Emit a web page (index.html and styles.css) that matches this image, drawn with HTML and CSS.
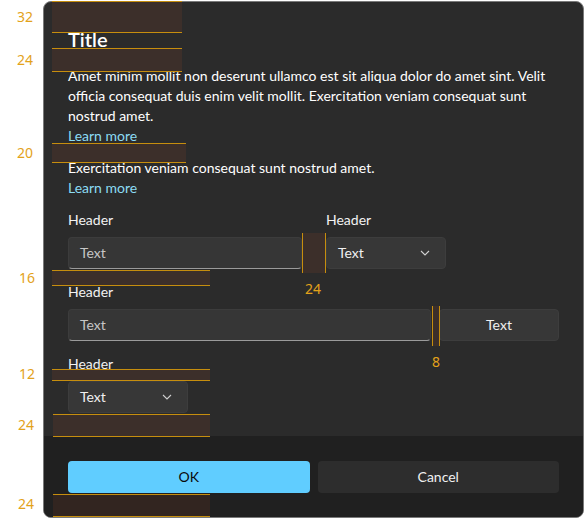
FILE: index.html
```html
<!DOCTYPE html>
<html>
<head>
<meta charset="utf-8">
<link rel="stylesheet" href="styles.css">
</head>
<body>
<div class="page">
  <div class="dialog">
    <div class="content">
      <div class="title">Title</div>
      <p class="body">Amet minim mollit non deserunt ullamco est sit aliqua dolor do amet sint. Velit<br>officia consequat duis enim velit mollit. Exercitation veniam consequat sunt<br>nostrud amet.<br><span class="link">Learn more</span></p>
      <p class="body p2">Exercitation veniam consequat sunt nostrud amet.<br><span class="link">Learn more</span></p>
      <div class="row row-wide">
        <div class="field f-text">
          <div class="label">Header</div>
          <div class="textbox">Text</div>
        </div>
        <div class="field f-combo">
          <div class="label">Header</div>
          <div class="combo"><span>Text</span><svg class="chev" width="10" height="6" viewBox="0 0 10 6"><path d="M1 1 L5 5 L9 1" fill="none" stroke="#cfcfcf" stroke-width="1.1"/></svg></div>
        </div>
      </div>
      <div class="field spaced">
        <div class="label">Header</div>
        <div class="row row-tight">
          <div class="textbox grow">Text</div>
          <div class="btn">Text</div>
        </div>
      </div>
      <div class="field spaced">
        <div class="label">Header</div>
        <div class="combo small"><span>Text</span><svg class="chev" width="10" height="6" viewBox="0 0 10 6"><path d="M1 1 L5 5 L9 1" fill="none" stroke="#cfcfcf" stroke-width="1.1"/></svg></div>
      </div>
    </div>
    <div class="footer">
      <div class="fbtn ok">OK</div>
      <div class="fbtn cancel">Cancel</div>
    </div>
  </div>

  <div class="ov h o32"></div><div class="num n32">32</div>
  <div class="ov h o24a"></div><div class="num n24a">24</div>
  <div class="ov h o20"></div><div class="num n20">20</div>
  <div class="ov h o16"></div><div class="num n16">16</div>
  <div class="ov v g24"></div><div class="num ng24">24</div>
  <div class="ov v g8"></div><div class="num ng8">8</div>
  <div class="ov h o12"></div><div class="num n12">12</div>
  <div class="ov h o24b"></div><div class="num n24b">24</div>
  <div class="ov h o24c"></div><div class="num n24c">24</div>
</div>
</body>
</html>
```
FILE: styles.css
```css
html, body {
  margin: 0;
  padding: 0;
  background: #ffffff;
}
.page {
  position: relative;
  width: 586px;
  height: 523px;
  overflow: hidden;
  font-family: "Lato", "Noto Sans", sans-serif;
}
.dialog {
  box-sizing: border-box;
  margin: 1px 0 0 43px;
  width: 541px;
  height: 517px;
  border: 1px solid #7a7a7a;
  border-radius: 8px;
  overflow: hidden;
  display: flex;
  flex-direction: column;
  background: #2b2b2b;
}
.content {
  flex: 1;
  padding: 23px 24px 0 24px;
  color: #ffffff;
}
.title {
  font-size: 20px;
  line-height: 28px;
  font-weight: 600;
  margin: 0;
}
.body {
  font-size: 14px;
  line-height: 20px;
  margin: 13px 0 0 0;
  white-space: nowrap;
}
.body.p2 {
  margin-top: 12px;
}
.link {
  color: #8cdcf4;
}
.row {
  display: flex;
}
.row-wide {
  margin-top: 11px;
  gap: 24px;
}
.row-tight {
  gap: 8px;
}
.field.spaced {
  margin-top: 12px;
}
.f-text {
  width: 234px;
}
.f-combo {
  width: 120px;
}
.label {
  font-size: 14px;
  line-height: 20px;
  padding-top: 1px;
  margin-bottom: 7px;
  color: #f2f2f2;
}
.textbox {
  box-sizing: border-box;
  height: 32px;
  background: #363636;
  border: 1px solid #3c3c3c;
  border-bottom: 1px solid #9b9b9b;
  border-radius: 4px;
  padding: 0 11px;
  font-size: 14px;
  line-height: 30px;
  color: #c6c6c6;
}
.grow {
  flex: 1;
}
.combo {
  box-sizing: border-box;
  height: 32px;
  background: #373737;
  border: 1px solid #3d3d3d;
  border-radius: 4px;
  padding: 0 15px 0 11px;
  font-size: 14px;
  line-height: 30px;
  color: #f0f0f0;
  display: flex;
  align-items: center;
  justify-content: space-between;
}
.combo.small {
  width: 120px;
}
.chev {
  display: block;
}
.btn {
  box-sizing: border-box;
  width: 120px;
  height: 32px;
  background: #373737;
  border: 1px solid #3d3d3d;
  border-radius: 4px;
  font-size: 14px;
  line-height: 30px;
  text-align: center;
  color: #f0f0f0;
}
.footer {
  height: 81px;
  box-sizing: border-box;
  background: #202020;
  padding: 25px 24px 24px 24px;
  display: flex;
  gap: 8px;
}
.fbtn {
  flex: 1;
  box-sizing: border-box;
  height: 32px;
  border-radius: 4px;
  font-size: 14px;
  line-height: 32px;
  text-align: center;
}
.fbtn.ok {
  background: #60cdff;
  color: #0a0a0a;
}
.fbtn.cancel {
  background: #2d2d2d;
  color: #f0f0f0;
}

/* redline annotations */
.ov {
  position: absolute;
  box-sizing: border-box;
  background: rgba(215, 85, 35, 0.1);
}
.ov.h {
  border-top: 1px solid #c68e0e;
  border-bottom: 1px solid #c68e0e;
}
.ov.v {
  border-left: 1px solid #c68e0e;
  border-right: 1px solid #c68e0e;
}
.num {
  position: absolute;
  width: 30px;
  text-align: center;
  font-size: 14px;
  line-height: 16px;
  color: #e3a21a;
  font-family: "Noto Sans", sans-serif;
}
.o32 { left: 52px; top: 1px; width: 130px; height: 32px; }
.n32 { left: 10px; top: 9px; }
.o24a { left: 52px; top: 48px; width: 130px; height: 24px; }
.n24a { left: 10px; top: 52px; }
.o20 { left: 52px; top: 143px; width: 134px; height: 20px; }
.n20 { left: 10px; top: 145px; }
.o16 { left: 52px; top: 270px; width: 158px; height: 16px; }
.n16 { left: 12px; top: 270px; }
.g24 { left: 302px; top: 233px; width: 24px; height: 40px; }
.ng24 { left: 298px; top: 281px; }
.g8 { left: 432px; top: 306px; width: 8px; height: 40px; }
.ng8 { left: 421px; top: 354px; }
.o12 { left: 52px; top: 369px; width: 158px; height: 12px; }
.n12 { left: 12px; top: 366px; }
.o24b { left: 53px; top: 414px; width: 157px; height: 23px; }
.n24b { left: 11px; top: 417px; }
.o24c { left: 53px; top: 494px; width: 157px; height: 23px; }
.n24c { left: 11px; top: 496px; }
```
